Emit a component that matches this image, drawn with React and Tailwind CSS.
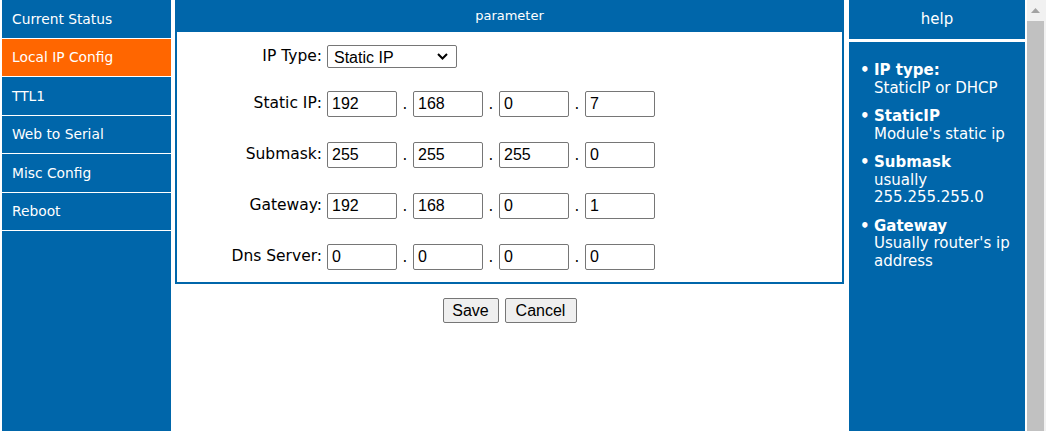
import React, { useState } from "react";

const MENU = ["Current Status", "Local IP Config", "TTL1", "Web to Serial", "Misc Config", "Reboot"];

const ROWS = [
  { label: "Static IP:", value: ["192", "168", "0", "7"] },
  { label: "Submask:", value: ["255", "255", "255", "0"] },
  { label: "Gateway:", value: ["192", "168", "0", "1"] },
  { label: "Dns Server:", value: ["0", "0", "0", "0"] },
];

const HELP = [
  { title: "IP type:", text: ["StaticIP or DHCP"] },
  { title: "StaticIP", text: ["Module's static ip"] },
  { title: "Submask", text: ["usually", "255.255.255.0"] },
  { title: "Gateway", text: ["Usually router's ip", "address"] },
];

function IpInput({ value }) {
  return (
    <input
      defaultValue={value}
      className="w-[70px] h-[26px] border border-[#767676] rounded-[2px] px-[4px] text-[16px] text-black bg-white outline-none"
      style={{ fontFamily: '"Liberation Sans", Arial, sans-serif' }}
    />
  );
}

function IpRow({ label, value, className }) {
  return (
    <div className={"flex items-center h-[26px] " + (className || "")}>
      <div className="w-[150px] text-right pr-[5px] text-[15.5px] text-black">{label}</div>
      {value.map((v, i) => (
        <React.Fragment key={i}>
          {i > 0 ? <div className="w-[16px] text-center text-[15px] text-black">.</div> : null}
          <IpInput value={v} />
        </React.Fragment>
      ))}
    </div>
  );
}

export default function App() {
  const [active] = useState(1);

  return (
    <div
      className="flex h-[431px] w-[1046px] overflow-hidden bg-white"
      style={{ fontFamily: '"DejaVu Sans", Verdana, sans-serif' }}
    >
      {/* left menu */}
      <div className="ml-[2px] w-[169px] bg-[#0066aa] flex flex-col">
        {MENU.map((m, i) => (
          <div
            key={m}
            className={
              "h-[38.5px] shrink-0 flex items-center pl-[10px] pt-[1px] border-b border-white text-[13.8px] text-white " +
              (i === active ? "bg-[#ff6600]" : "bg-[#0066aa]")
            }
          >
            {m}
          </div>
        ))}
      </div>

      {/* main */}
      <div className="w-[678px] pl-[4px] pr-[5px] flex flex-col">
        <div className="h-[32px] bg-[#0066aa] text-white text-[13px] flex items-center justify-center">
          parameter
        </div>
        <div className="border-2 border-t-0 border-[#0066aa] pt-[13px] pb-[12px]">
          <div className="flex items-center h-[23px]">
            <div className="w-[150px] text-right pr-[5px] text-[15.5px] text-black">IP Type:</div>
            <div className="relative w-[130px] h-[23px]">
              <select
                defaultValue="static"
                className="appearance-none w-full h-full border border-[#767676] rounded-[2px] pl-[6px] text-[16px] text-black bg-white outline-none"
                style={{ fontFamily: '"Liberation Sans", Arial, sans-serif' }}
              >
                <option value="static">Static IP</option>
                <option value="dhcp">DHCP</option>
              </select>
              <svg
                className="absolute right-[9px] top-[8px] pointer-events-none"
                width="11"
                height="7"
                viewBox="0 0 11 7"
              >
                <path d="M1 1 L5.5 5.5 L10 1" fill="none" stroke="#000" strokeWidth="2" />
              </svg>
            </div>
          </div>
          <IpRow {...ROWS[0]} className="mt-[23px]" />
          <IpRow {...ROWS[1]} className="mt-[25px]" />
          <IpRow {...ROWS[2]} className="mt-[25px]" />
          <IpRow {...ROWS[3]} className="mt-[25px]" />
        </div>
        <div
          className="mt-[14px] flex justify-center gap-[6px]"
          style={{ fontFamily: '"Liberation Sans", Arial, sans-serif' }}
        >
          <button className="w-[56px] h-[25px] bg-[#efefef] border border-[#767676] rounded-[2px] text-[16px] text-black">
            Save
          </button>
          <button className="w-[72px] h-[25px] bg-[#efefef] border border-[#767676] rounded-[2px] text-[16px] text-black">
            Cancel
          </button>
        </div>
      </div>

      {/* help */}
      <div className="w-[176px] flex flex-col">
        <div className="h-[39px] shrink-0 bg-[#0066aa] text-white text-[15px] flex items-center justify-center">
          help
        </div>
        <div className="mt-[3px] flex-1 bg-[#0066aa] text-white text-[15px] leading-[17.5px] pt-[20px] pl-[11px]">
          {HELP.map((h) => (
            <div key={h.title} className="flex mb-[11px]">
              <div className="w-[14px] shrink-0 font-bold">•</div>
              <div>
                <div className="font-bold">{h.title}</div>
                {h.text.map((t) => (
                  <div key={t}>{t}</div>
                ))}
              </div>
            </div>
          ))}
        </div>
      </div>

      {/* scrollbar */}
      <div className="ml-[2px] w-[19px] bg-[#f1f1f1] flex flex-col">
        <div className="h-[21px] flex items-center justify-center pr-[2px]">
          <svg width="9" height="5" viewBox="0 0 9 5">
            <path d="M0 5 L4.5 0 L9 5 Z" fill="#a3a3a3" />
          </svg>
        </div>
        <div className="flex-1 w-[17px] bg-[#c1c1c1]" />
      </div>
    </div>
  );
}
